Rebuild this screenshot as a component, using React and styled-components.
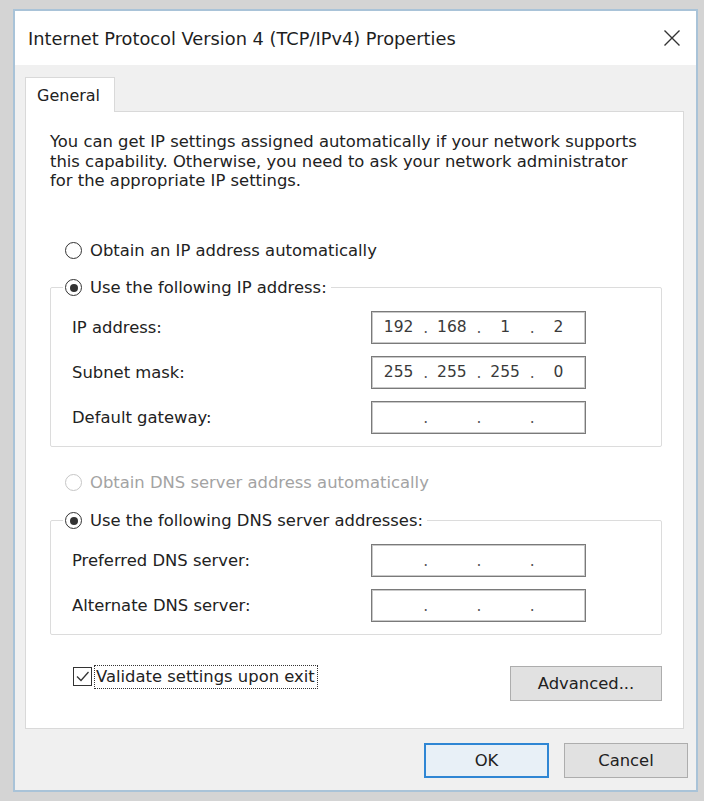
import React from "react"
import styled, { createGlobalStyle } from "styled-components"

const GlobalStyle = createGlobalStyle`
  html, body {
    margin: 0;
    padding: 0;
    background: #d4d4d4;
  }
  body {
    font-family: "DejaVu Sans", "Noto Sans", "Liberation Sans", sans-serif;
    color: #222;
  }
`

const Desktop = styled.div`
  padding: 9px 6px 9px 13px;
  min-height: 783px;
`

const Window = styled.div`
  width: 681px;
  border: 2px solid #a9c3d8;
  background: #f0f0f0;
  display: flex;
  flex-direction: column;
`

const TitleBar = styled.div`
  height: 54px;
  background: #fff;
  display: flex;
  align-items: center;
  justify-content: space-between;
  padding: 0 14px 0 13px;
`

const Title = styled.span`
  font-size: 17.8px;
  color: #1e1e1e;
`

const CloseBtn = styled.button`
  width: 20px;
  height: 20px;
  padding: 0;
  border: 0;
  background: transparent;
  display: flex;
  align-items: center;
  justify-content: center;
`

const Body = styled.div`
  padding: 12px 10px 12px 10px;
  display: flex;
  flex-direction: column;
`

const TabStrip = styled.div`
  display: flex;
  height: 35px;
  margin-bottom: -1px;
  position: relative;
  z-index: 1;
`

const Tab = styled.div`
  width: 90px;
  box-sizing: border-box;
  background: #fff;
  border: 1px solid #d9d9d9;
  border-bottom: 0;
  padding-left: 11px;
  display: flex;
  align-items: center;
  font-size: 16px;
  color: #222;
`

const Panel = styled.div`
  width: 659px;
  box-sizing: border-box;
  background: #fff;
  border: 1px solid #d9d9d9;
  padding: 20px 21px 27px 24px;
  display: flex;
  flex-direction: column;
`

const Description = styled.p`
  margin: 0;
  font-size: 16.4px;
  line-height: 19.5px;
  white-space: nowrap;
  color: #222;
`

const RadioRow = styled.label`
  display: flex;
  align-items: center;
  gap: 8px;
  height: 20px;
  font-size: 16.4px;
  margin-left: ${p => p.$indent || 0}px;
  margin-top: ${p => p.$top || 0}px;
  color: ${p => (p.$disabled ? "#a3a3a3" : "#222")};
  white-space: nowrap;
`

const RadioCircle = styled.span`
  width: 15px;
  height: 15px;
  flex: none;
  border-radius: 50%;
  border: 1px solid ${p => (p.$disabled ? "#c6c6c6" : "#333")};
  background: #fff;
  display: flex;
  align-items: center;
  justify-content: center;

  &::after {
    content: "";
    width: 8px;
    height: 8px;
    border-radius: 50%;
    background: #333;
    display: ${p => (p.$checked ? "block" : "none")};
  }
`

const Group = styled.fieldset`
  margin: ${p => p.$top}px 0 0 0;
  padding: 0;
  border: 1px solid #dcdcdc;
  border-radius: 2px;
  min-width: 0;
`

const Legend = styled.legend`
  margin-left: 12px;
  padding: 0 4px 0 2px;
`

const Rows = styled.div`
  display: grid;
  grid-template-columns: 1fr 215px;
  row-gap: 12px;
  align-items: center;
  padding: 13px 75px 12px 21px;
`

const FieldLabel = styled.span`
  font-size: 16.4px;
  color: #222;
  white-space: nowrap;
`

const IpBox = styled.div`
  height: 33px;
  box-sizing: border-box;
  border: 1px solid #7a7a7a;
  box-shadow: inset 0 0 0 1px #c9c9c9;
  background: #fff;
  display: flex;
  align-items: center;
`

const Octet = styled.span`
  flex: 1;
  display: flex;
  align-items: center;
  justify-content: center;
  position: relative;
  font-size: 15.5px;
  color: #3a3a3a;
  height: 100%;
`

const Dot = styled.span`
  position: absolute;
  right: -3px;
  top: 50%;
  transform: translateY(-45%);
  font-size: 15.5px;
  color: #555;
`

const Footer = styled.div`
  margin-top: 31px;
  display: flex;
  justify-content: space-between;
  align-items: flex-start;
`

const CheckRow = styled.label`
  display: flex;
  align-items: center;
  gap: 2px;
  margin-left: 23px;
  height: 22px;
`

const CheckBox = styled.span`
  width: 19px;
  height: 19px;
  flex: none;
  box-sizing: border-box;
  border: 1px solid #333;
  background: #fff;
  display: flex;
  align-items: center;
  justify-content: center;
`

const FocusText = styled.span`
  border: 1px dotted #333;
  padding: 1px 2px 1px 1px;
  font-size: 16.4px;
  line-height: 20px;
  color: #222;
  white-space: nowrap;
`

const Button = styled.button`
  width: ${p => p.$w}px;
  height: 35px;
  box-sizing: border-box;
  border: ${p => (p.$primary ? "2px solid #2f86d4" : "1px solid #adadad")};
  background: ${p => (p.$primary ? "#e8f0f7" : "#e1e1e1")};
  font-family: inherit;
  font-size: 16.4px;
  color: #222;
  padding: 0;
`

const ButtonBar = styled.div`
  margin-top: 14px;
  display: flex;
  justify-content: flex-end;
  gap: 15px;
  margin-right: -2px;
`

const Radio = ({ checked, disabled, children, indent, top }) => (
  <RadioRow $disabled={disabled} $indent={indent} $top={top}>
    <RadioCircle $checked={checked} $disabled={disabled} />
    {children}
  </RadioRow>
)

const IpField = ({ value }) => {
  const parts = value ? value.split(".") : ["", "", "", ""]
  return (
    <IpBox>
      {parts.map((p, i) => (
        <Octet key={i}>
          {p}
          {i < 3 && <Dot>.</Dot>}
        </Octet>
      ))}
    </IpBox>
  )
}

const ipRows = [
  { label: "IP address:", value: "192.168.1.2" },
  { label: "Subnet mask:", value: "255.255.255.0" },
  { label: "Default gateway:", value: "" },
]

const dnsRows = [
  { label: "Preferred DNS server:", value: "" },
  { label: "Alternate DNS server:", value: "" },
]

export default function App() {
  return (
    <>
      <GlobalStyle />
      <Desktop>
        <Window>
          <TitleBar>
            <Title>Internet Protocol Version 4 (TCP/IPv4) Properties</Title>
            <CloseBtn aria-label="Close">
              <svg width="18" height="18" viewBox="0 0 18 18">
                <path d="M1.5 1.5 L16.5 16.5 M16.5 1.5 L1.5 16.5" stroke="#333" strokeWidth="1.4" fill="none" />
              </svg>
            </CloseBtn>
          </TitleBar>

          <Body>
            <TabStrip>
              <Tab>General</Tab>
            </TabStrip>

            <Panel>
              <Description>
                You can get IP settings assigned automatically if your network supports
                <br />
                this capability. Otherwise, you need to ask your network administrator
                <br />
                for the appropriate IP settings.
              </Description>

              <Radio indent={15} top={50}>Obtain an IP address automatically</Radio>

              <Group $top={17}>
                <Legend>
                  <Radio checked>Use the following IP address:</Radio>
                </Legend>
                <Rows>
                  {ipRows.map(r => (
                    <React.Fragment key={r.label}>
                      <FieldLabel>{r.label}</FieldLabel>
                      <IpField value={r.value} />
                    </React.Fragment>
                  ))}
                </Rows>
              </Group>

              <Radio indent={15} top={26} disabled>Obtain DNS server address automatically</Radio>

              <Group $top={18}>
                <Legend>
                  <Radio checked>Use the following DNS server addresses:</Radio>
                </Legend>
                <Rows>
                  {dnsRows.map(r => (
                    <React.Fragment key={r.label}>
                      <FieldLabel>{r.label}</FieldLabel>
                      <IpField value={r.value} />
                    </React.Fragment>
                  ))}
                </Rows>
              </Group>

              <Footer>
                <CheckRow>
                  <CheckBox>
                    <svg width="15" height="15" viewBox="0 0 15 15">
                      <path d="M2 7.5 L6 11.5 L13.5 3" stroke="#333" strokeWidth="1.3" fill="none" />
                    </svg>
                  </CheckBox>
                  <FocusText>Validate settings upon exit</FocusText>
                </CheckRow>
                <Button $w={152}>Advanced...</Button>
              </Footer>
            </Panel>

            <ButtonBar>
              <Button $w={125} $primary>OK</Button>
              <Button $w={124}>Cancel</Button>
            </ButtonBar>
          </Body>
        </Window>
      </Desktop>
    </>
  )
}
